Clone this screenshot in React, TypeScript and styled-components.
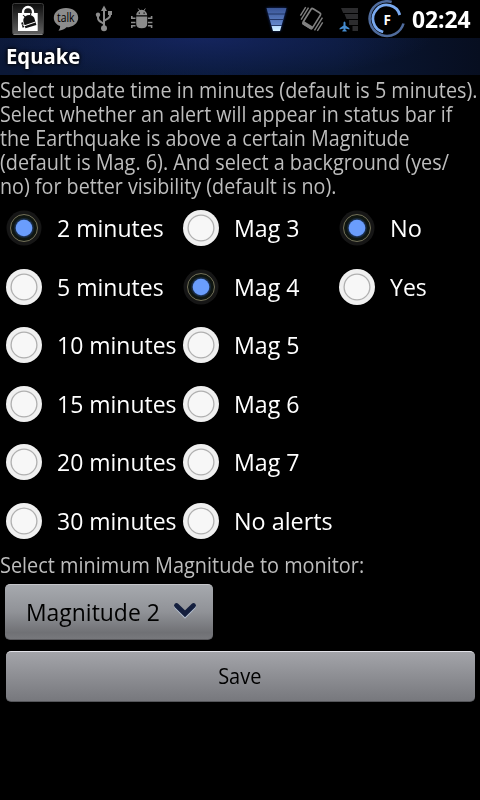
import React, { useState } from "react";
import styled, { createGlobalStyle } from "styled-components";

const GlobalStyle = createGlobalStyle`
  * { box-sizing: border-box; }
  html, body { margin: 0; background: #000; }
  body { font-family: "Open Sans", "Noto Sans", sans-serif; overflow: hidden; }
`;

const Screen = styled.main`
  display: flex;
  flex-direction: column;
  width: 480px;
  height: 800px;
  background: #000;
  overflow: hidden;
`;

const StatusBar = styled.header`
  display: flex;
  flex: none;
  height: 38px;
`;

const StatusIcons = styled.svg`
  display: block;
  flex: none;
  width: 408px;
  height: 38px;
`;

const Clock = styled.time`
  padding-left: 4px;
  font-size: 24px;
  font-weight: 700;
  line-height: 38px;
  color: #fff;
  white-space: nowrap;
`;

const TitleBar = styled.h1`
  display: flex;
  align-items: center;
  flex: none;
  height: 37px;
  margin: 0;
  padding: 0 0 2px 6px;
  font-size: 21px;
  font-weight: 700;
  line-height: 30px;
  color: #fff;
  text-shadow: 0 0 5px #000, 0 0 3px #000;
  background:
    radial-gradient(ellipse 230px 42px at 42% 0, rgba(24, 40, 104, 0.75), transparent),
    linear-gradient(90deg, #0b1836, #0a1a3c 45%, #0a1836 70%, #070e20);
`;

const Fit = styled.span<{ $scale: number }>`
  display: inline-block;
  transform: scaleX(${(p) => p.$scale});
  transform-origin: 0 50%;
  white-space: nowrap;
`;

const CenteredFit = styled(Fit)`
  transform-origin: 50% 50%;
`;

const Description = styled.p`
  display: flex;
  flex-direction: column;
  align-items: flex-start;
  flex: none;
  margin: 0;
  padding: 3px 0 1px;
  font-size: 21px;
  line-height: 24px;
  color: #bdbdbd;
`;

const MonitorLabel = styled(Description)`
  padding: 3px 0 0;
`;

const Groups = styled.div`
  display: grid;
  flex: none;
  grid-template-columns: 177px 156px 147px;
  height: 351px;
`;

const Group = styled.div`
  display: flex;
  flex-direction: column;
`;

const Option = styled.label`
  display: flex;
  align-items: center;
  flex: none;
  gap: 15px;
  height: 58.5px;
  padding-left: 6px;
  font-size: 24px;
  line-height: 32px;
  color: #fff;
`;

const RadioMark = styled.svg`
  flex: none;
  width: 36px;
  height: 36px;
`;

const Spinner = styled.div`
  display: flex;
  align-items: center;
  flex: none;
  width: 208px;
  height: 56px;
  margin: 7px 0 0 5px;
  padding: 0 16px 0 21px;
  border-top: 1px solid #c4c5ca;
  border-bottom: 1px solid #58585c;
  border-radius: 5px;
  background: linear-gradient(#a6a9ae, #909297 50%, #707175 88%, #77787c);
  font-size: 24px;
  line-height: 32px;
  color: #000;
`;

const SpinnerText = styled.div`
  flex: 1;
`;

const Chevron = styled.svg`
  flex: none;
  width: 24px;
  height: 20px;
  margin-bottom: 5px;
`;

const Save = styled.button`
  flex: none;
  width: 469px;
  height: 51px;
  margin: 10.5px 0 0 5.5px;
  padding: 0 0 1px;
  border: 0;
  border-top: 1px solid #e2e2e8;
  border-bottom: 1px solid #55565a;
  border-radius: 5px;
  background: linear-gradient(#a3a4a9, #77787d);
  font: 21px "Open Sans", "Noto Sans", sans-serif;
  color: #000;
`;

type Line = [text: string, scale: number];

const DESCRIPTION: Line[] = [
  ["Select update time in minutes (default is 5 minutes).", 0.9415],
  ["Select whether an alert will appear in status bar if", 0.937],
  ["the Earthquake is above a certain Magnitude", 0.938],
  ["(default is Mag. 6). And select a background (yes/", 0.944],
  ["no) for better visibility (default is no).", 0.939],
];

const GROUPS: { options: Line[]; initial: number }[] = [
  {
    options: [
      ["2 minutes", 0.96],
      ["5 minutes", 0.96],
      ["10 minutes", 0.957],
      ["15 minutes", 0.957],
      ["20 minutes", 0.957],
      ["30 minutes", 0.957],
    ],
    initial: 0,
  },
  {
    options: [
      ["Mag 3", 0.965],
      ["Mag 4", 0.965],
      ["Mag 5", 0.965],
      ["Mag 6", 0.965],
      ["Mag 7", 0.965],
      ["No alerts", 0.973],
    ],
    initial: 1,
  },
  {
    options: [
      ["No", 0.98],
      ["Yes", 0.96],
    ],
    initial: 0,
  },
];

function Radio({ checked }: { checked: boolean }) {
  return checked ? (
    <RadioMark viewBox="0 0 36 36">
      <defs>
        <radialGradient id="halo">
          <stop offset="0.55" stopColor="#27447c" />
          <stop offset="0.78" stopColor="#0e1612" />
          <stop offset="1" stopColor="#11150f" />
        </radialGradient>
      </defs>
      <circle cx="18" cy="18" r="17.5" fill="#161616" />
      <circle cx="18" cy="18" r="13.5" fill="url(#halo)" stroke="#7d7a60" strokeWidth="0.9" />
      <circle cx="18" cy="18" r="8.3" fill="#6a9dfc" />
    </RadioMark>
  ) : (
    <RadioMark viewBox="0 0 36 36">
      <circle cx="18" cy="18" r="18" fill="#f0f0f0" />
      <circle cx="18" cy="18" r="12.9" fill="#f7f7f7" stroke="#b0b0b0" strokeWidth="1.3" />
    </RadioMark>
  );
}

function RadioGroup({ options, initial }: { options: Line[]; initial: number }) {
  const [selected, setSelected] = useState(initial);
  return (
    <Group role="radiogroup">
      {options.map(([text, scale], i) => (
        <Option key={text} onClick={() => setSelected(i)}>
          <Radio checked={selected === i} />
          <Fit $scale={scale}>{text}</Fit>
        </Option>
      ))}
    </Group>
  );
}

function Icons() {
  return (
    <StatusIcons viewBox="0 0 408 38">
      <defs>
        <linearGradient id="tile" x2="0" y2="1">
          <stop stopColor="#0c0c0c" />
          <stop offset="1" stopColor="#626262" />
        </linearGradient>
        <linearGradient id="signal" x2="0" y2="1">
          <stop stopColor="#3a5596" />
          <stop offset="0.75" stopColor="#6488cc" />
          <stop offset="0.8" stopColor="#b9dcff" />
          <stop offset="1" stopColor="#d5f2ff" />
        </linearGradient>
        <filter id="glow" x="-50%" y="-50%" width="200%" height="200%">
          <feGaussianBlur stdDeviation="1.6" />
        </filter>
      </defs>

      {/* market bag */}
      <rect x="12.5" y="3.5" width="31" height="31" rx="2" fill="url(#tile)" stroke="#3c3c3c" />
      <path d="M13.5 34.500h29" stroke="#888" />
      <path d="M23 15v-3a5 5 0 0 1 10 0v3" fill="none" stroke="#fff" strokeWidth="2.3" />
      <path d="M18 13h19.700v18H18z" fill="#fff" />
      <g transform="rotate(-17 29 21)" fill="#111">
        <path d="M23.500 20a5.700 5 0 0 1 11.400 0zM23.500 19.500h11.400v7.500h-11.400zM21 20.500h1.800v5H21z" />
        <path d="M25 13.500l1.400 2.500M33.400 13.500l-1.400 2.500" stroke="#111" strokeWidth="1" />
      </g>
      <path d="M22.500 24.800l2.500.8 10.500-3.600" fill="none" stroke="#fff" strokeWidth="1" />

      {/* talk bubble */}
      <path d="M66 8c7 0 12.200 4.200 12.200 9.700S73 27.300 66.500 27.300c-1.600 1.700-4.500 3.200-8 3.400 1.200-1.400 1.700-3 1.600-4.600C56.300 24.400 53.800 21.500 53.800 17.700 53.800 12.200 59 8 66 8z" fill="#8c8c8c" />
      <text x="57" y="22.300" textLength="17.500" lengthAdjust="spacingAndGlyphs" fontSize="12.500" fill="#000">talk</text>

      {/* usb */}
      <path d="M104 9v18M104 24.500c0-2.500-6-2-6-6.500v-2.500M104 21.500c0-2.500 6-2 6-6v-3" fill="none" stroke="#8c8c8c" strokeWidth="2" />
      <g fill="#8c8c8c">
        <path d="M104 5.500l3 5.500h-6z" />
        <circle cx="104" cy="28.200" r="3" />
        <circle cx="98" cy="14.800" r="2.200" />
        <rect x="108" y="11" width="4" height="4" />
      </g>

      {/* android debugging */}
      <g stroke="#8c8c8c" strokeWidth="1.600" fill="none">
        <path d="M138.300 8.500l1.600 2.500M145.300 8.500l-1.600 2.500" strokeWidth="1" />
        <path d="M131.800 16v2.300h3.700M131 22.500h4.500M131.800 28v-2.200h3.700M151.600 16v2.300h-3.700M152.400 22.500h-4.500M151.600 28v-2.200h-3.700" />
      </g>
      <path d="M136.200 15.300a5.500 5.500 0 0 1 11 0zM136.200 16.500h11v7.500q0 4.200-5.500 4.200t-5.500-4.200z" fill="#8c8c8c" />
      <path d="M138.700 12.500h1.200v1.200h-1.200zM143.500 12.500h1.200v1.200h-1.200z" fill="#000" />

      {/* wireless strength */}
      <path d="M266.500 8h20l-6.500 23h-7z" fill="#2450c0" filter="url(#glow)" opacity="0.65" />
      <path d="M266.500 8h20l-6.500 23h-7z" fill="url(#signal)" />
      <path d="M268 14h17M269.500 19.500h14M271 25.500h11" stroke="#1c2f5c" strokeWidth="0.9" />

      {/* vibrate */}
      <g fill="none" stroke="#808080" transform="rotate(32 311.500 19)">
        <rect x="306" y="9.500" width="11" height="18" rx="1.500" strokeWidth="1.700" />
        <path d="M306 26.500h11" strokeWidth="3.500" />
        <path d="M303 11v14M300.300 12v10M320 12v15M322.800 16v10" strokeWidth="1.400" />
      </g>

      {/* airplane mode */}
      <path d="M341 8h17v5h-14.800zM344.500 14h13.500v5h-11.500zM349 20h9v5h-9zM352.500 26h5.500v5h-5.500z" fill="#2c2c2e" />
      <path d="M344.500 21.500c.7 0 1 .8 1 1.700v2.300l3.900 2.700v1.200l-3.900-1v1.400l1.200 1v.7h-4.400v-.7l1.200-1v-1.400l-3.900 1v-1.200l3.900-2.700v-2.300c0-.9.300-1.700 1-1.700z" fill="#458cd0" />

      {/* battery ring */}
      <g fill="none">
        <path d="M391.700 2A17.300 17.300 0 1 0 403.500 23.500" stroke="#4f6b9c" strokeWidth="2.600" />
        <path d="M399.800 15A13.700 13.700 0 1 0 383.200 32" stroke="#79a9ef" strokeWidth="2.800" />
      </g>
      <text x="383.500" y="24.800" fontSize="13.500" fontWeight="700" fill="#fff">F</text>
    </StatusIcons>
  );
}

export default function App() {
  return (
    <Screen>
      <GlobalStyle />
      <StatusBar>
        <Icons />
        <Clock>
          <Fit $scale={0.95}>02:24</Fit>
        </Clock>
      </StatusBar>
      <TitleBar>
        <Fit $scale={0.965}>Equake</Fit>
      </TitleBar>
      <Description>
        {DESCRIPTION.map(([text, scale]) => (
          <Fit key={text} $scale={scale}>
            {text}
          </Fit>
        ))}
      </Description>
      <Groups>
        {GROUPS.map((group, i) => (
          <RadioGroup key={i} {...group} />
        ))}
      </Groups>
      <MonitorLabel>
        <Fit $scale={0.948}>Select minimum Magnitude to monitor:</Fit>
      </MonitorLabel>
      <Spinner>
        <SpinnerText>
          <Fit $scale={0.955}>Magnitude 2</Fit>
        </SpinnerText>
        <Chevron viewBox="0 0 24 20">
          <path d="M3.500 7l8.500 8.500L20.500 7" fill="none" stroke="#b3bfd0" strokeWidth="4.500" strokeLinecap="round" />
          <path d="M3.500 5.500l8.500 8.300 8.500-8.300" fill="none" stroke="#141f3e" strokeWidth="4.800" strokeLinecap="round" />
        </Chevron>
      </Spinner>
      <Save>
        <CenteredFit $scale={0.95}>Save</CenteredFit>
      </Save>
    </Screen>
  );
}
